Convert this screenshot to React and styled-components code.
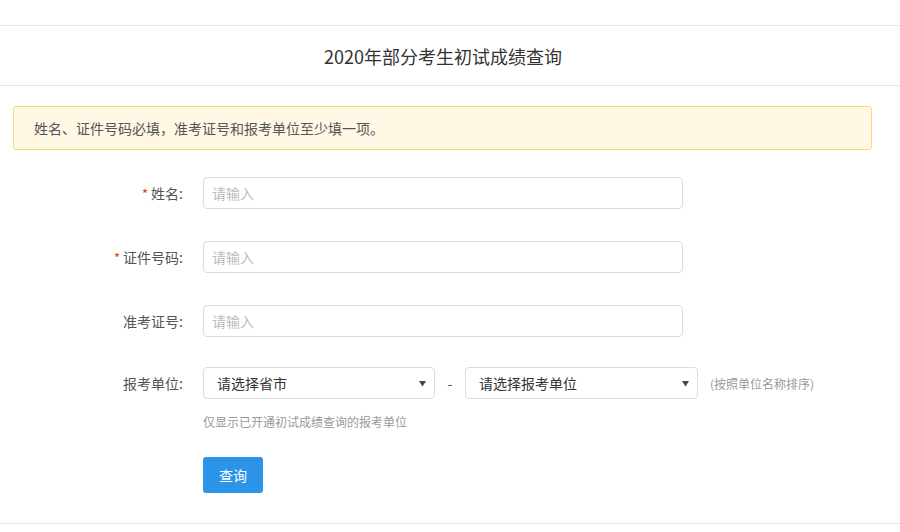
import React from "react";
import styled, { createGlobalStyle } from "styled-components";

const Global = createGlobalStyle`
  html, body { margin: 0; padding: 0; background: #fff; }
  body { font-family: "Noto Sans CJK SC", "Noto Sans", sans-serif; color: #555; }
  * { box-sizing: border-box; }
`;

const Page = styled.div`
  padding-top: 25px;
  width: 900px;
`;

const Header = styled.header`
  height: 61px;
  border-top: 1px solid #e6e6e6;
  border-bottom: 1px solid #e6e6e6;
  display: flex;
  align-items: center;
  justify-content: center;
  padding-right: 14px;
`;

const Title = styled.h1`
  margin: 0;
  font-size: 18px;
  font-weight: 400;
  color: #333;
  line-height: 1;
`;

const Main = styled.main`
  padding: 20px 28px 30px 13px;
  border-bottom: 1px solid #e6e6e6;
`;

const Alert = styled.div`
  height: 44px;
  border: 1px solid #fcd680;
  background: #fff8e5;
  border-radius: 3px;
  display: flex;
  align-items: center;
  padding-left: 20px;
  font-size: 14px;
  color: #555;
`;

const Form = styled.form`
  margin-top: 27px;
  display: flex;
  flex-direction: column;
`;

const Row = styled.div`
  display: flex;
  align-items: center;
  height: 32px;
  margin-bottom: ${(p) => p.$mb ?? 32}px;
`;

const Label = styled.label`
  width: 170px;
  margin-right: 20px;
  text-align: right;
  font-size: 14px;
  color: #555;
  flex-shrink: 0;
`;

const Star = styled.span`
  color: #e8380d;
  margin-right: 3px;
  font-size: 13px;
`;

const Input = styled.input`
  width: 480px;
  height: 32px;
  border: 1px solid #dcdcdc;
  border-radius: 4px;
  padding: 0 8px;
  font-size: 14px;
  font-family: inherit;
  color: #333;
  outline: none;
  &::placeholder { color: #bbb; }
`;

const Select = styled.div`
  width: ${(p) => p.$w}px;
  height: 32px;
  border: 1px solid #dcdcdc;
  border-radius: 4px;
  padding: 0 8px 0 13px;
  display: flex;
  align-items: center;
  justify-content: space-between;
  font-size: 14px;
  color: #333;
`;

const Dash = styled.span`
  width: 30px;
  text-align: center;
  font-size: 14px;
  color: #555;
`;

const Hint = styled.span`
  margin-left: 12px;
  font-size: 12px;
  color: #999;
`;

const Help = styled.div`
  margin-left: 190px;
  font-size: 12px;
  color: #999;
  margin-bottom: 27px;
`;

const Button = styled.button`
  margin-left: 190px;
  width: 60px;
  height: 36px;
  border: none;
  border-radius: 3px;
  background: #2b94e8;
  color: #fff;
  font-size: 14px;
  font-family: inherit;
  cursor: pointer;
`;

const Caret = () => (
  <svg width="7" height="7" viewBox="0 0 7 7">
    <path d="M0 1 L7 1 L3.5 6.5 Z" fill="#444" />
  </svg>
);

export default function App() {
  return (
    <Page>
      <Global />
      <Header>
        <Title>2020年部分考生初试成绩查询</Title>
      </Header>
      <Main>
        <Alert>姓名、证件号码必填，准考证号和报考单位至少填一项。</Alert>
        <Form onSubmit={(e) => e.preventDefault()}>
          <Row>
            <Label><Star>*</Star>姓名:</Label>
            <Input placeholder="请输入" />
          </Row>
          <Row>
            <Label><Star>*</Star>证件号码:</Label>
            <Input placeholder="请输入" />
          </Row>
          <Row $mb={30}>
            <Label>准考证号:</Label>
            <Input placeholder="请输入" />
          </Row>
          <Row $mb={14}>
            <Label>报考单位:</Label>
            <Select $w={232}><span>请选择省市</span><Caret /></Select>
            <Dash>-</Dash>
            <Select $w={233}><span>请选择报考单位</span><Caret /></Select>
            <Hint>(按照单位名称排序)</Hint>
          </Row>
          <Help>仅显示已开通初试成绩查询的报考单位</Help>
          <Button type="submit">查询</Button>
        </Form>
      </Main>
    </Page>
  );
}
